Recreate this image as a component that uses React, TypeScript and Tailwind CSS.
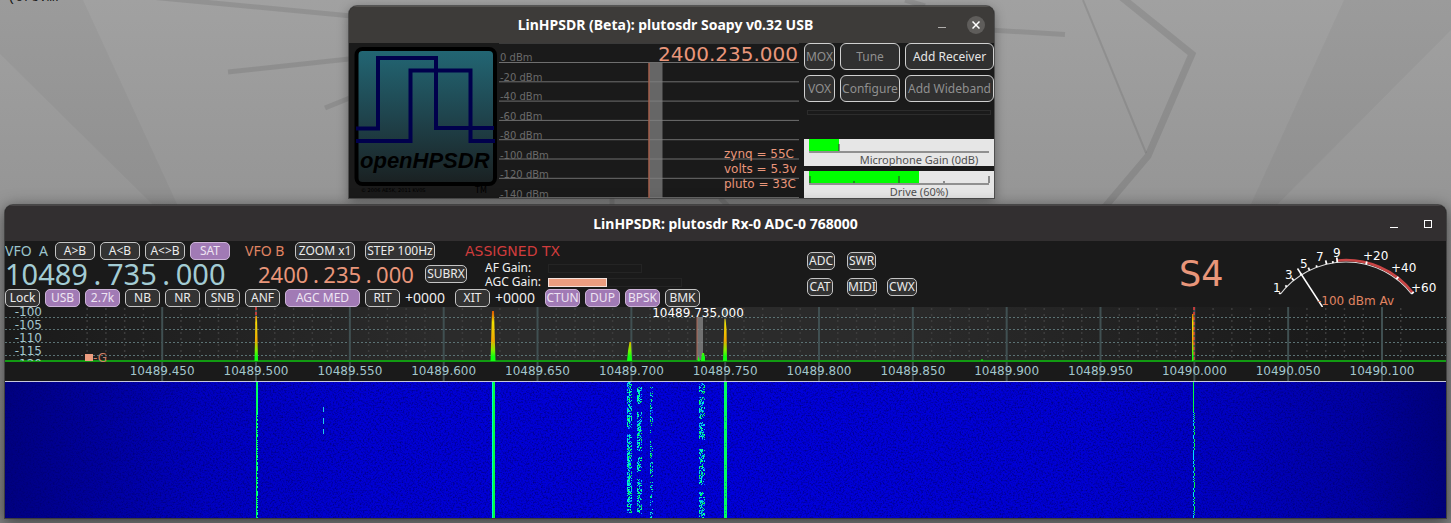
import React from "react";

const UI = "font-['Noto_Sans','Open_Sans',sans-serif]";
const DEJAVU = "DejaVu Sans, sans-serif";

/* ---------- shared pieces ---------- */

function makeRandom(seed: number) {
  let s = seed;
  return () => {
    s = (s * 1664525 + 1013904223) % 4294967296;
    return s / 4294967296;
  };
}

function Wallpaper() {
  return (
    <svg
      className="absolute inset-0 h-full w-full"
      viewBox="0 0 1451 523"
      preserveAspectRatio="xMidYMin slice"
      aria-hidden="true"
    >
      <defs>
        <linearGradient id="wall" x1="0" y1="0" x2="0" y2="1">
          <stop offset="0" stopColor="#a1a1a1" />
          <stop offset="0.4" stopColor="#959595" />
          <stop offset="1" stopColor="#868686" />
        </linearGradient>
      </defs>
      <rect width="1451" height="523" fill="url(#wall)" />
      <path d="M0 0H83L178 206H154L0 54Z" fill="#000" opacity="0.035" />
      <path d="M1344 0H1451V30L1276 206H1250Z" fill="#000" opacity="0.035" />
      <g fill="none" stroke="#000" strokeOpacity="0.09" strokeWidth="5">
        <path d="M150 -3L520 32" />
        <path d="M228 72L349 59L500 48" />
        <path d="M325 108L352 97" />
        <path d="M940 27L1065 34.500" />
        <path d="M1120 -4L1192 54L1148 156L1104 208" strokeWidth="7" />
        <path d="M1083 0L1146 153" strokeWidth="2" />
        <path d="M612 198V206M720 198L728 206M905 0L925 6" />
      </g>
    </svg>
  );
}

/* ---------- transmitter window ---------- */

function Logo() {
  return (
    <svg width="150" height="155" viewBox="349 43 150 155" className="block shrink-0" role="img" aria-label="openHPSDR">
      <defs>
        <linearGradient id="teal" x1="0" y1="0" x2="0" y2="1">
          <stop offset="0" stopColor="#226674" />
          <stop offset="0.5" stopColor="#1f444d" />
          <stop offset="1" stopColor="#1a2021" />
        </linearGradient>
      </defs>
      <rect x="356.500" y="49" width="138.500" height="135" rx="6" fill="url(#teal)" stroke="#000" strokeWidth="4" />
      <g fill="none" stroke="#00004c" strokeWidth="4">
        <path d="M356 128.500H378V58H436V128H494" />
        <path d="M356 141H410.500V70.500H470.500V141H495" />
      </g>
      <text x="360" y="168" fontFamily="Liberation Sans, sans-serif" fontWeight="700" fontStyle="italic" fontSize="22" fill="#000">
        openHPSDR
      </text>
      <text x="361" y="192" fontFamily={DEJAVU} fontSize="5" fill="#000">
        © 2006 AE5K, 2011 KV0S
      </text>
      <text x="475" y="193" fontFamily={DEJAVU} fontSize="8" fill="#000">
        TM
      </text>
    </svg>
  );
}

const txLevels = [0, -20, -40, -60, -80, -100, -120, -140];
const sensors = ["zynq = 55C", "volts = 5.3v", "pluto = 33C"];

function TxPanadapter() {
  return (
    <svg width="300" height="155" viewBox="499 43 300 155" className="block shrink-0">
      <path d="M499 43.500H799" stroke="#3a3a3a" />
      {txLevels.map((level, i) => (
        <g key={level}>
          <path d={`M499 ${62.5 + i * 19.3}H799`} stroke="#6f6f6f" />
          <text x="500" y={61 + i * 19.5} fontFamily={DEJAVU} fontSize="10" fill="#6a6a6a">
            {level} dBm
          </text>
        </g>
      ))}
      <rect x="649" y="63" width="13.500" height="135" fill="#808080" fillOpacity="0.75" />
      <path d="M649 63V198" stroke="#a5604c" strokeWidth="1.500" />
      <text x="798" y="61" textAnchor="end" fontFamily={DEJAVU} fontSize="20" fill="#e9967a">
        2400.235.000
      </text>
      {sensors.map((s, i) => (
        <text key={s} x="724" y={158 + i * 15} fontFamily={DEJAVU} fontSize="12" fill="#e9967a">
          {s}
        </text>
      ))}
    </svg>
  );
}

function TxButton({ children, disabled }: { children: React.ReactNode; disabled?: boolean }) {
  return (
    <button
      type="button"
      disabled={disabled}
      className="flex h-[27px] items-center justify-center rounded-md border border-[#d0d0d0] bg-[#303030] text-xs whitespace-nowrap text-[#e6e6e6] disabled:text-[#8f8f8f]"
    >
      {children}
    </button>
  );
}

function GainSlider(props: { id: string; label: string; value: number; fill: string; ticks: number[][] }) {
  return (
    <div className="relative flex h-[27px] flex-col bg-[#e6e6e6] px-[5px]">
      <input
        id={props.id}
        type="range"
        min={0}
        max={100}
        defaultValue={props.value}
        className={`m-0 block h-[14px] w-full appearance-none border-b-2 border-[#909090] ${props.fill} [&::-webkit-slider-thumb]:h-0 [&::-webkit-slider-thumb]:w-0 [&::-webkit-slider-thumb]:appearance-none`}
      />
      <svg className="absolute top-0 left-[5px]" width="181" height="14" aria-hidden="true">
        {props.ticks.map(([x, h]) => (
          <rect key={x} x={x} y={12 - h} width="2" height={h} fill="#303030" fillOpacity="0.5" />
        ))}
      </svg>
      <label htmlFor={props.id} className="pl-10 text-center text-[11px] leading-[13px] whitespace-nowrap text-[#505050]">
        {props.label}
      </label>
    </div>
  );
}

function TxWindow() {
  return (
    <section className="absolute top-[6px] left-[349px] w-[645px] overflow-hidden rounded-t-lg bg-[#1a1a1a] shadow-[0_0_0_1px_rgba(60,60,60,0.7),0_3px_12px_rgba(0,0,0,0.4)]">
      <header className="flex h-[37px] items-center border-t border-[#555350] bg-[#3d3b39] pr-[9px] pl-[28px]">
        <h1 className="flex-1 text-center text-sm font-bold text-white">
          LinHPSDR (Beta): plutosdr Soapy v0.32 USB
        </h1>
        <div className="-ml-4 flex items-center gap-[21px]">
          <button type="button" aria-label="Minimize" className="flex h-[18px] w-[8px] items-end pb-[6px]">
            <span className="block h-px w-full bg-[#b0aeac]" />
          </button>
          <button type="button" aria-label="Close" className="flex h-[18px] w-[18px] items-center justify-center rounded-full bg-[#5f5d5b]">
            <svg width="8" height="8" viewBox="0 0 8 8" stroke="#fff" strokeWidth="1.500" aria-hidden="true">
              <path d="M0.500 0.500L7.500 7.500M7.500 0.500L0.500 7.500" />
            </svg>
          </button>
        </div>
      </header>
      <div className="flex">
        <Logo />
        <TxPanadapter />
        <div className="ml-[5px] flex w-[190px] flex-col">
          <div className="grid grid-cols-[31px_60px_89px] gap-[5px]">
            <TxButton disabled>MOX</TxButton>
            <TxButton disabled>Tune</TxButton>
            <TxButton>Add Receiver</TxButton>
            <TxButton disabled>VOX</TxButton>
            <TxButton disabled>Configure</TxButton>
            <TxButton disabled>Add Wideband</TxButton>
          </div>
          <div className="mx-[3px] mt-2 h-[5px] border border-[#2c2c2c]" />
          <div className="mt-6 flex flex-col gap-[5px]">
            <GainSlider
              id="mic"
              label="Microphone Gain (0dB)"
              value={17}
              fill="bg-[linear-gradient(90deg,#00ff00_30px,transparent_30px)]"
              ticks={[[29, 7]]}
            />
            <GainSlider
              id="drive"
              label="Drive (60%)"
              value={60}
              fill="bg-[linear-gradient(90deg,#00ff00_61%,transparent_61%)]"
              ticks={[[0, 7], [44, 2], [89, 7], [134, 2], [179, 7]]}
            />
          </div>
        </div>
      </div>
    </section>
  );
}

/* ---------- receiver window ---------- */

function Key({ w = "w-[35px]", on, children }: { w?: string; on?: boolean; children: React.ReactNode }) {
  const tone = on ? "border-[#cdb4d8] bg-[#a17ab5] text-[#eee4f2]" : "border-[#c4c4c4] bg-[#333333] text-[#ececec]";
  return (
    <button
      type="button"
      className={`flex h-[18px] shrink-0 items-center justify-center rounded-[5px] border text-xs leading-4 whitespace-nowrap ${w} ${tone}`}
    >
      {children}
    </button>
  );
}

function Frequency({ value, size, cell }: { value: string; size: string; cell: string }) {
  const parts = value.split(".");
  return (
    <span className={`whitespace-nowrap ${size}`}>
      {parts.map((p, i) => (
        <React.Fragment key={i}>
          {i > 0 && <span className={`inline-block text-center ${cell}`}>.</span>}
          {p}
        </React.Fragment>
      ))}
    </span>
  );
}

function Lamp({ w, children }: { w: string; children: React.ReactNode }) {
  return (
    <span
      className={`flex h-[18px] items-center justify-center rounded-[5px] border border-[#c4c4c4] bg-[#333333] text-xs leading-4 text-[#ececec] ${w}`}
    >
      {children}
    </span>
  );
}

const meterTicks: [number, number][] = [
  [-52, 3], [-45.5, 3], [-39, 4], [-32.500, 3], [-26, 4], [-20.500, 3], [-13.500, 5], [-9, 3], [-6, 6], [14, 4], [37.500, 4], [52, 4],
];
const meterLabels: [string, number, number][] = [
  ["1", 1273, 292], ["3", 1285, 279], ["5", 1300, 268], ["7", 1316, 261], ["9", 1333, 257],
  ["+20", 1363, 260], ["+40", 1391, 272], ["+60", 1411, 292],
];

function SMeter() {
  return (
    <svg width="180" height="66" viewBox="1266 241 180 66" className="block shrink-0">
      <path d="M1280.500 294A83 83 0 0 1 1411.500 294" fill="none" stroke="#d8d8d8" strokeWidth="1.200" />
      <path d="M1337.500 260.500A85 85 0 0 1 1413 293" fill="none" stroke="#c94545" strokeWidth="2.500" />
      {meterTicks.map(([a, len]) => (
        <path key={a} d={`M1346 262v${-len + 1}`} transform={`rotate(${a} 1346 345)`} stroke="#fff" strokeWidth="1.800" />
      ))}
      <path d="M1297.500 268.500L1322.500 307" stroke="#fff" strokeWidth="1.500" />
      <g fontFamily={DEJAVU} fontSize="12" fill="#fff">
        {meterLabels.map(([t, x, y]) => (
          <text key={t} x={x} y={y}>
            {t}
          </text>
        ))}
        <text x="1317" y="305" fill="#e08563">
          -100 dBm Av
        </text>
      </g>
    </svg>
  );
}

function ControlPanel() {
  return (
    <div className="flex h-[66px] bg-[#1a1a1a]">
      <div className="flex w-[695px] shrink-0 flex-col pt-px">
        <div className="flex h-[18px] items-center">
          <span className="w-[50px] text-sm leading-[18px] whitespace-pre text-[#9cc4cc]">{"VFO  A"}</span>
          <div className="flex gap-[5px]">
            <Key w="w-10">A&gt;B</Key>
            <Key w="w-10">A&lt;B</Key>
            <Key w="w-10">A&lt;&gt;B</Key>
            <Key w="w-10" on>SAT</Key>
          </div>
          <span className="ml-[15px] w-[50px] text-sm leading-[18px] text-[#e08563]">VFO B</span>
          <Key w="w-[60px]">ZOOM x1</Key>
          <span className="w-[10px]" />
          <Key w="w-[70px]">STEP 100Hz</Key>
          <span className="ml-[30px] font-['DejaVu_Sans',sans-serif] text-sm leading-[18px] text-[#d03c3c]">ASSIGNED TX</span>
        </div>
        <div className="flex h-[29px] pt-px">
          <div className="w-[253px] text-[#a3ccd4]">
            <Frequency value="10489.735.000" size="text-[29px] leading-[26px]" cell="w-[19px]" />
          </div>
          <div className="w-[167px] text-[#e9967a]">
            <Frequency value="2400.235.000" size="text-[22px] leading-[26px]" cell="w-[15px]" />
          </div>
          <div className="pt-1">
            <Key w="w-[42px]">SUBRX</Key>
          </div>
          <div className="ml-[18px] grid grid-cols-[63px_134px] content-start items-center text-xs leading-[14px] text-[#f0f0f0]">
            <span>AF Gain:</span>
            <span className="h-[9px] w-[94px] border border-[#242424]" />
            <span className="whitespace-nowrap">AGC Gain:</span>
            <span className="flex h-[9px] border border-[#242424]">
              <span className="-m-px h-[9px] w-[59px] border border-[#f4e2dc] bg-[#ec9d80]" />
            </span>
          </div>
        </div>
        <div className="flex h-[18px] items-center gap-[5px]">
          <Key>Lock</Key>
          <Key on>USB</Key>
          <Key on>2.7k</Key>
          <Key>NB</Key>
          <Key>NR</Key>
          <Key>SNB</Key>
          <Key>ANF</Key>
          <Key w="w-[75px]" on>AGC MED</Key>
          <Key>RIT</Key>
          <span className="w-[45px] text-sm leading-[18px] text-[#f0f0f0]">+0000</span>
          <Key>XIT</Key>
          <span className="w-[45px] text-sm leading-[18px] text-[#f0f0f0]">+0000</span>
          <Key on>CTUN</Key>
          <Key on>DUP</Key>
          <Key on>BPSK</Key>
          <Key>BMK</Key>
        </div>
      </div>
      <div className="ml-[107px] grid grid-cols-[40px_40px_40px] content-start gap-y-2 pt-[11px]">
        <Lamp w="w-7">ADC</Lamp>
        <Lamp w="w-[29px]">SWR</Lamp>
        <span />
        <Lamp w="w-[26px]">CAT</Lamp>
        <Lamp w="w-[30px]">MIDI</Lamp>
        <Lamp w="w-[30px]">CWX</Lamp>
      </div>
      <div className="ml-auto flex">
        <span className="w-[87px] font-['DejaVu_Sans',sans-serif] text-[35px] leading-[66px] text-[#e9967a]">S4</span>
        <SMeter />
      </div>
    </div>
  );
}

const SPAN = 1441;
const FIRST = 157.2;
const STEP = 93.83;
const freqLabels = [
  "10489.450", "10489.500", "10489.550", "10489.600", "10489.650", "10489.700", "10489.750",
  "10489.800", "10489.850", "10489.900", "10489.950", "10490.000", "10490.050", "10490.100",
];
const dbLabels = ["-100", "-105", "-110", "-115", "-120"];
const gridRows = [10.5, 22.5, 35.5, 48.5];
const pct = (x: number) => `${(x / SPAN) * 100}%`;

function Spectrum() {
  const minor = Array.from({ length: 72 }, (_, i) => i)
    .filter((i) => i % 5 !== 0)
    .map((i) => FIRST - STEP + i * (STEP / 5))
    .filter((x) => x > 80);
  return (
    <div className="relative h-[74px] overflow-hidden font-['DejaVu_Sans',sans-serif] text-xs leading-3 text-[#a3c6cc]">
      <svg className="block h-full w-full" viewBox="0 0 1441 74" preserveAspectRatio="none" aria-hidden="true">
        <defs>
          <linearGradient id="panbg">
            <stop offset="0" stopColor="#1a1a1a" />
            <stop offset="0.3" stopColor="#2b2b2b" />
            <stop offset="0.62" stopColor="#2b2b2b" />
            <stop offset="0.92" stopColor="#1a1a1a" />
          </linearGradient>
          <linearGradient id="peak" gradientUnits="userSpaceOnUse" x1="0" y1="0" x2="0" y2="54">
            <stop offset="0" stopColor="#e03000" />
            <stop offset="0.14" stopColor="#e07800" />
            <stop offset="0.28" stopColor="#f0e000" />
            <stop offset="0.62" stopColor="#f0a800" />
            <stop offset="0.8" stopColor="#80f000" />
            <stop offset="0.92" stopColor="#10ff10" />
          </linearGradient>
        </defs>
        <rect width="1441" height="74" fill="#1a1a1a" />
        <rect width="1441" height="54" fill="url(#panbg)" />
        {minor.map((x) => (
          <path key={x} d={`M${x} 1V53`} stroke="#3c3c3c" strokeWidth="1.500" strokeDasharray="2 4" />
        ))}
        {gridRows.map((y) => (
          <path key={y} d={`M0 ${y}H1441`} stroke="#5b7274" strokeDasharray="2 2" />
        ))}
        {freqLabels.map((f, i) => (
          <path key={f} d={`M${FIRST + i * STEP} 0V74`} stroke="#405052" strokeWidth="2" />
        ))}
        <rect x="692" y="10" width="6" height="44" fill="#909090" fillOpacity="0.7" />
        <path d="M692 10V54" stroke="#b06a58" />
        <path d="M251 0V20M1189 0V54" stroke="#e83838" strokeWidth="1.500" strokeDasharray="3 2" />
        <path d="M0 54H1441" stroke="#129a12" strokeWidth="2" />
        <path
          d="M249.500 54L250.500 9H252L253 54ZM485.500 54L487 4H489L490.500 54ZM622 54L623 44L624.500 35H626L627 54ZM692.500 54L693.500 49L695 54ZM696 54L697 46H699L700 50V54ZM718 54L719.500 12H720.500L721.500 22L722 54ZM1187 54V7H1188.500V54Z"
          fill="url(#peak)"
        />
        <path d="M976 53h2" stroke="#10ff10" />
        <rect x="80" y="47" width="8" height="7" fill="#ec9d80" />
      </svg>
      <div className="absolute top-0 left-0 h-[54px] w-[37px] overflow-hidden text-right">
        <div className="-mt-px flex flex-col gap-px">
          {dbLabels.map((d) => (
            <span key={d}>{d}</span>
          ))}
        </div>
      </div>
      <span className="absolute top-[45px] left-[88px] text-[#d08068]">-G</span>
      <span className="absolute top-0 -translate-x-1/2 text-white" style={{ left: pct(693) }}>
        10489.735.000
      </span>
      {freqLabels.map((f, i) => (
        <span key={f} className="absolute top-[58px] -translate-x-1/2" style={{ left: pct(FIRST + i * STEP) }}>
          {f}
        </span>
      ))}
    </div>
  );
}

type Cell = { x: number; y: number; w: number; h: number; c: string };

function buildSignals(): Cell[] {
  const rnd = makeRandom(4242);
  const out: Cell[] = [];
  const bursts = [
    { x: 622, w: 5, runs: [[0, 47], [52, 131]], density: 0.7 },
    { x: 632, w: 5, runs: [[5, 22], [30, 69], [75, 90], [97, 132]], density: 0.6 },
    { x: 645, w: 3, runs: [[5, 40], [41, 52], [58, 77], [80, 95], [100, 136]], density: 0.4 },
    { x: 694, w: 6, runs: [[1, 12], [15, 37], [40, 58], [67, 103], [110, 136]], density: 0.6 },
  ];
  for (const b of bursts) {
    for (const [from, to] of b.runs) {
      for (let y = from; y < to; y++) {
        for (let i = 0; i < b.w; i++) {
          const edge = i >= b.w - 2 ? 0.65 : 1;
          if (rnd() < b.density * edge) {
            const t = rnd();
            const c = t < 0.25 ? "#00ff50" : t < 0.65 ? "#00f0d0" : t < 0.85 ? "#00b0ff" : "#0060ff";
            out.push({ x: b.x + i, y, w: 1, h: 1, c });
          }
        }
      }
    }
  }
  for (let y = 30; y < 136; y++) {
    if (rnd() < 0.55) out.push({ x: 252, y, w: 1, h: 1, c: "#00ffb0" });
    const left = rnd() < 0.45;
    out.push({ x: left ? 1188 : 1189, y, w: 1, h: 1, c: left ? "#00e0ff" : "#00ff40" });
    if (rnd() < 0.2) out.push({ x: 720, y, w: 1, h: 1, c: "#00a090" });
  }
  return out;
}

const signals = buildSignals();

function Waterfall() {
  return (
    <svg
      className="block h-[137px] w-full border-t border-[#c8c8dc]"
      viewBox="0 0 1441 136"
      preserveAspectRatio="none"
      shapeRendering="crispEdges"
      role="img"
      aria-label="Waterfall"
    >
      <defs>
        <linearGradient id="water">
          <stop offset="0" stopColor="#000080" />
          <stop offset="0.06" stopColor="#00009c" />
          <stop offset="0.14" stopColor="#0000c2" />
          <stop offset="0.25" stopColor="#0000d4" />
          <stop offset="0.5" stopColor="#0000dc" />
          <stop offset="0.75" stopColor="#0000d4" />
          <stop offset="0.86" stopColor="#0000c0" />
          <stop offset="0.94" stopColor="#0000a2" />
          <stop offset="1" stopColor="#000078" />
        </linearGradient>
        <filter id="grain" x="0" y="0" width="100%" height="100%">
          <feTurbulence type="fractalNoise" baseFrequency="0.6" numOctaves="2" seed="7" />
          <feColorMatrix values="0 0 0 0 0  0 0 0 0 0  0 0 0 0 0.15  1.800 0 0 0 -0.780" />
        </filter>
      </defs>
      <rect width="1441" height="136" fill="url(#water)" />
      <rect width="1441" height="136" filter="url(#grain)" />
      <rect x="251" y="0" width="1" height="136" fill="#00ff40" />
      <rect x="252" y="0" width="1" height="30" fill="#00ff80" />
      <rect x="487" y="0" width="1" height="136" fill="#00ffc0" />
      <rect x="488" y="0" width="2" height="136" fill="#00ff40" />
      <rect x="719" y="0" width="3" height="136" fill="#00ff60" />
      <rect x="1188" y="0" width="1" height="30" fill="#00ff40" />
      {[[25, 5], [36, 6], [47, 5]].map(([y, h]) => (
        <rect key={y} x="318" y={y} width="1" height={h} fill="#20c8e8" />
      ))}
      {signals.map((s, i) => (
        <rect key={i} x={s.x} y={s.y} width={s.w} height={s.h} fill={s.c} />
      ))}
    </svg>
  );
}

function RxWindow() {
  return (
    <section className="absolute top-[205px] right-[5px] left-[5px] overflow-hidden rounded-t-lg bg-[#1a1a1a] shadow-[0_0_0_1px_rgba(50,50,50,0.7),0_4px_16px_2px_rgba(0,0,0,0.5)]">
      <header className="flex h-9 items-center border-t border-[#484546] bg-[#322f30] pr-[14px] pl-[56px]">
        <h2 className="flex-1 text-center text-sm font-bold text-white">LinHPSDR: plutosdr Rx-0 ADC-0 768000</h2>
        <div className="flex items-center gap-[26px]">
          <button type="button" aria-label="Minimize" className="flex h-[9px] w-[8px] items-end">
            <span className="block h-px w-full bg-white" />
          </button>
          <button type="button" aria-label="Maximize" className="h-[8px] w-[8px] border border-white" />
        </div>
      </header>
      <ControlPanel />
      <Spectrum />
      <Waterfall />
    </section>
  );
}

export default function App() {
  return (
    <main className={`relative min-h-screen overflow-hidden bg-[#8c8c8c] ${UI}`}>
      <Wallpaper />
      <span className="absolute -top-[10px] left-0 font-['Liberation_Mono',monospace] text-[13px] leading-[15px] text-[#151515]">
        &apos;(ors.mr
      </span>
      <TxWindow />
      <RxWindow />
    </main>
  );
}
